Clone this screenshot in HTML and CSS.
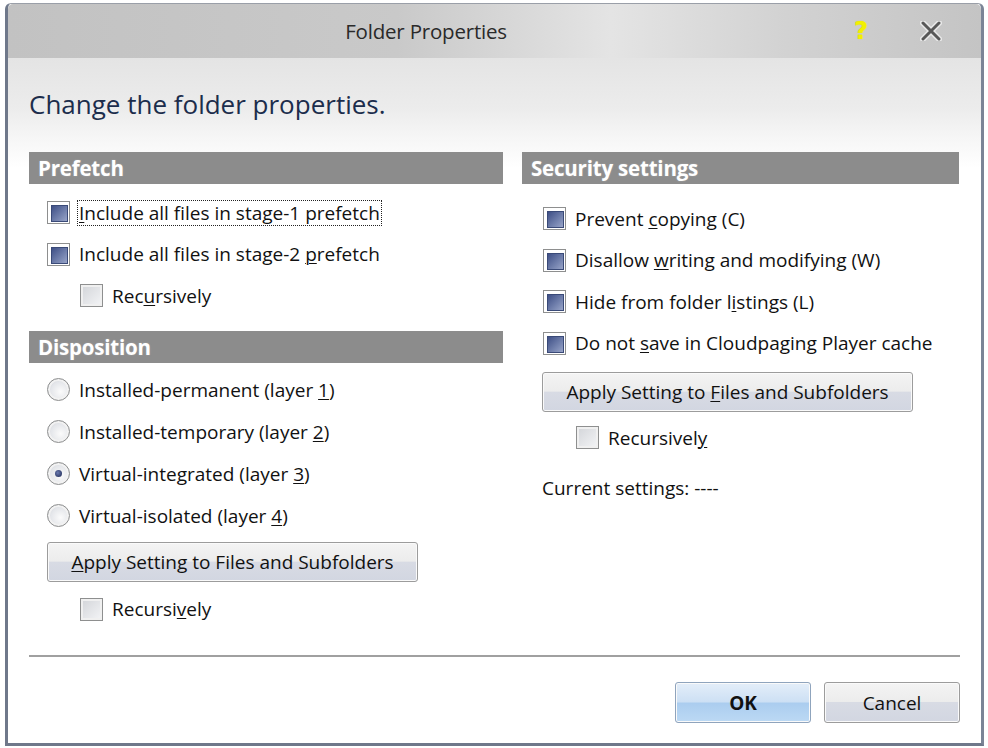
FILE: index.html
```html
<!DOCTYPE html>
<html>
<head>
    <title>Folder Properties</title>
    <link rel="stylesheet" href="styles.css">
</head>
<body>
    <div class="window">
        <div class="titlebar">
            <span class="title">Folder Properties</span>
            <span class="help">?</span>
            <span class="close">
                <svg width="22" height="20" viewBox="0 0 22 20">
                    <path d="M3 2 L19 18 M19 2 L3 18" stroke="#e8e8e8" stroke-width="6" stroke-linecap="round"/>
                    <path d="M3 2 L19 18 M19 2 L3 18" stroke="#585858" stroke-width="3" stroke-linecap="round"/>
                </svg>
            </span>
        </div>

        <div class="body">
            <div class="instruction">Change the folder properties.</div>

            <div class="columns">
                <div class="column left">
                    <div class="group-header">Prefetch</div>
                    <div class="group prefetch">
                        <div class="option">
                            <span class="check checked"></span>
                            <span class="label focused"><u>I</u>nclude all files in stage-1 prefetch</span>
                        </div>
                        <div class="option">
                            <span class="check checked"></span>
                            <span class="label">Include all files in stage-2 <u>p</u>refetch</span>
                        </div>
                        <div class="option sub">
                            <span class="check"></span>
                            <span class="label">Rec<u>u</u>rsively</span>
                        </div>
                    </div>

                    <div class="group-header">Disposition</div>
                    <div class="group disposition">
                        <div class="option radio-row">
                            <span class="radio"></span>
                            <span class="label">Installed-permanent (layer <u>1</u>)</span>
                        </div>
                        <div class="option radio-row">
                            <span class="radio"></span>
                            <span class="label">Installed-temporary (layer <u>2</u>)</span>
                        </div>
                        <div class="option radio-row">
                            <span class="radio selected"></span>
                            <span class="label">Virtual-integrated (layer <u>3</u>)</span>
                        </div>
                        <div class="option radio-row">
                            <span class="radio"></span>
                            <span class="label">Virtual-isolated (layer <u>4</u>)</span>
                        </div>
                        <button class="btn apply"><u>A</u>pply Setting to Files and Subfolders</button>
                        <div class="option sub">
                            <span class="check"></span>
                            <span class="label">Recursi<u>v</u>ely</span>
                        </div>
                    </div>
                </div>

                <div class="column right">
                    <div class="group-header">Security settings</div>
                    <div class="group security">
                        <div class="option">
                            <span class="check checked"></span>
                            <span class="label">Prevent <u>c</u>opying (C)</span>
                        </div>
                        <div class="option">
                            <span class="check checked"></span>
                            <span class="label">Disallow <u>w</u>riting and modifying (W)</span>
                        </div>
                        <div class="option">
                            <span class="check checked"></span>
                            <span class="label">Hide from folder l<u>i</u>stings (L)</span>
                        </div>
                        <div class="option">
                            <span class="check checked"></span>
                            <span class="label">Do not <u>s</u>ave in Cloudpaging Player cache</span>
                        </div>
                        <button class="btn apply">Apply Setting to <u>F</u>iles and Subfolders</button>
                        <div class="option sub">
                            <span class="check"></span>
                            <span class="label">Recursivel<u>y</u></span>
                        </div>
                        <div class="current">Current settings: ----</div>
                    </div>
                </div>
            </div>

            <div class="separator"></div>

            <div class="footer">
                <button class="btn dialog ok">OK</button>
                <button class="btn dialog">Cancel</button>
            </div>
        </div>
    </div>
</body>
</html>
```

FILE: styles.css
```css
* {
    box-sizing: border-box;
}

body {
    margin: 0;
    padding: 0;
    background-color: #ffffff;
    font-family: 'Open Sans', 'Noto Sans', sans-serif;
    color: #111111;
}

.window {
    margin: 3px 0 0 5px;
    width: 979px;
    height: 743px;
    border: 3px solid #6f788a;
    border-top: 1px solid #9a9fa8;
    border-right-color: #7b8496;
    border-radius: 6px 6px 0 0;
    display: flex;
    flex-direction: column;
    background-color: #ffffff;
}

.titlebar {
    height: 54px;
    flex-shrink: 0;
    display: flex;
    align-items: center;
    background: linear-gradient(90deg, #c2c2c2 0%, #c9c9c9 40%, #e4e4e4 62%, #d2d2d2 80%, #c4c4c4 100%);
    border-radius: 5px 5px 0 0;
    padding-right: 39px;
}

.title {
    flex: 1;
    text-align: center;
    padding-right: 10px;
    font-size: 20.5px;
    color: #2a2a2a;
    letter-spacing: -0.2px;
}

.help {
    color: #f2f000;
    font-family: 'DejaVu Sans', sans-serif;
    font-weight: bold;
    font-size: 24px;
    margin-right: 52px;
    text-shadow: 0 0 1px #d8d800;
}

.close {
    display: flex;
    align-items: center;
}

.body {
    flex: 1;
    display: flex;
    flex-direction: column;
    padding: 0 21px 0 21px;
    background: linear-gradient(180deg, #e4e4e4 0px, #ececec 50px, #f6f6f6 80px, #ffffff 110px);
}

.instruction {
    margin-top: 31px;
    height: 31px;
    font-size: 26px;
    line-height: 31px;
    color: #1c2d4c;
}

.columns {
    margin-top: 32px;
    display: flex;
    gap: 19px;
}

.column.left {
    width: 474px;
}

.column.right {
    width: 437px;
}

.group-header {
    height: 32px;
    line-height: 32px;
    background-color: #8c8c8c;
    color: #ffffff;
    font-weight: bold;
    font-size: 20.5px;
    padding-left: 9px;
    letter-spacing: -0.2px;
    text-shadow: 0 0 2px #a8a8a8;
}

.group {
    display: flex;
    flex-direction: column;
    align-items: flex-start;
}

.prefetch {
    padding: 8px 0 14px 18px;
}

.disposition {
    padding: 6px 0 0 18px;
}

.security {
    padding: 14px 0 0 21px;
}

.option {
    height: 41.5px;
    display: flex;
    align-items: center;
    gap: 7px;
    font-size: 19px;
}

.radio-row {
    height: 42px;
}

.option.sub {
    margin-left: 33px;
}

.label {
    border: 1px solid transparent;
    padding: 0 1px;
    line-height: 24px;
}

.label.focused {
    border: 1px dotted #222222;
}

u {
    text-decoration-thickness: 1px;
    text-underline-offset: 2px;
}

.check {
    width: 23px;
    height: 23px;
    flex-shrink: 0;
    border: 1px solid #8e8f8f;
    background: linear-gradient(135deg, #d2d4d8, #f4f5f7);
    box-shadow: inset 0 0 0 2px #f0f0f0;
    position: relative;
}

.check.checked {
    background: #ffffff;
    box-shadow: none;
}

.check.checked::after {
    content: "";
    position: absolute;
    left: 3px;
    top: 3px;
    width: 15px;
    height: 15px;
    border: 1px solid #3a4a78;
    background: linear-gradient(135deg, #3e4f86, #7382ae 60%, #98a4c8);
}

.radio {
    width: 23px;
    height: 23px;
    flex-shrink: 0;
    border-radius: 50%;
    border: 1px solid #8e8f8f;
    background: radial-gradient(circle at 60% 60%, #fbfbfb 0%, #e4e6ea 55%, #c8cbd0 100%);
    box-shadow: inset 0 0 0 2px #f2f2f2;
    position: relative;
}

.radio.selected::after {
    content: "";
    position: absolute;
    left: 7px;
    top: 7px;
    width: 7px;
    height: 7px;
    border-radius: 50%;
    background: radial-gradient(circle at 40% 40%, #6a7ab0, #1a2550);
}

.btn {
    font-family: 'Open Sans', 'Noto Sans', sans-serif;
    font-size: 19px;
    color: #111111;
    border: 1px solid #9c9c9c;
    border-radius: 3px;
    background: linear-gradient(180deg, #f4f4f4 0%, #ececec 48%, #d8dbe4 50%, #d2d6e1 100%);
    box-shadow: inset 0 0 0 1px #fafafa;
    padding: 0;
}

.apply {
    width: 371px;
    height: 40px;
}

.disposition .apply {
    margin-top: 5px;
    margin-bottom: 7px;
}

.security .apply {
    margin-top: 8px;
    margin-bottom: 5px;
    margin-left: -1px;
}

.security .option.sub {
    margin-left: 33px;
}

.current {
    margin-top: 9px;
    margin-left: -1px;
    height: 41px;
    line-height: 41px;
    font-size: 19px;
}

.separator {
    margin-top: auto;
    height: 2px;
    background-color: #a0a0a0;
    margin-bottom: 25px;
}

.footer {
    display: flex;
    justify-content: flex-end;
    gap: 13px;
    margin-bottom: 20px;
}

.dialog {
    width: 136px;
    height: 41px;
}

.ok {
    font-weight: bold;
    border-color: #8fa4bd;
    background: linear-gradient(180deg, #e4eef9 0%, #cde0f4 48%, #abcdef 52%, #bcd9f4 100%);
}
```
